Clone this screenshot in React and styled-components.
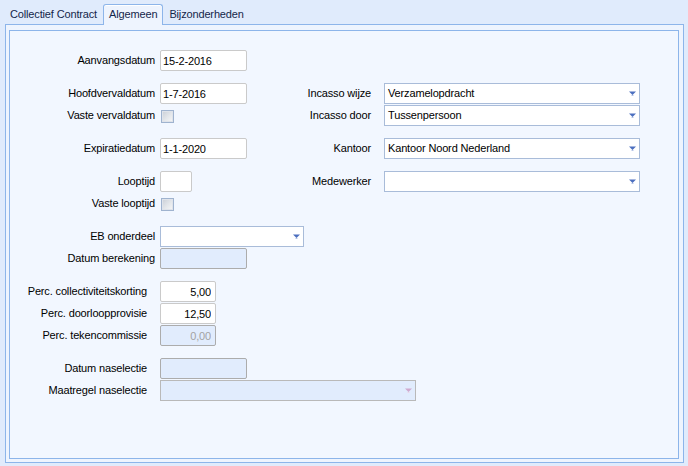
import React from 'react'
import styled, { createGlobalStyle } from 'styled-components'

const GlobalStyle = createGlobalStyle`
  html, body {
    margin: 0;
    padding: 0;
  }
  body {
    background: #e0ebfc;
    font-family: "Liberation Sans", Arial, sans-serif;
    font-size: 11px;
    letter-spacing: -0.15px;
    color: #000;
  }
`

const Window = styled.div`
  width: 688px;
  height: 466px;
  box-sizing: border-box;
  padding: 4px 4px 3px 5px;
  display: flex;
  flex-direction: column;
  background: #e0ebfc;
`

const TabStrip = styled.div`
  display: flex;
  align-items: flex-end;
  height: 20px;
  margin-left: -1px;
  position: relative;
  z-index: 1;
`

const Tab = styled.div`
  height: ${p => (p.$active ? '21px' : '20px')};
  margin-bottom: ${p => (p.$active ? '-1px' : '0')};
  box-sizing: border-box;
  padding: 0 5px;
  line-height: 19px;
  color: #14264a;
  border: 1px solid ${p => (p.$active ? '#8db5ea' : 'transparent')};
  border-bottom: none;
  border-radius: 3px 3px 0 0;
  background: ${p => (p.$active ? '#eef4fe' : 'transparent')};
  box-shadow: ${p => (p.$active ? 'inset 0 1px 0 #ffffff' : 'none')};
  white-space: nowrap;
`

const OuterFrame = styled.div`
  flex: 1;
  display: flex;
  border: 1px solid #8db5ea;
  background: #eef4fe;
  padding: 5px 4px 3px 3px;
`

const Panel = styled.div`
  flex: 1;
  border: 1px solid #8db5ea;
  background: #f2f7ff;
  padding: 19px 0 0 0;
  display: grid;
  grid-template-columns: 290px 1fr;
  align-items: start;
`

const Column = styled.div`
  display: flex;
  flex-direction: column;
  gap: 11px;
  padding-top: ${p => p.$top || 0}px;
`

const Group = styled.div`
  display: flex;
  flex-direction: column;
`

const Row = styled.div`
  display: flex;
  align-items: flex-start;
  height: 22px;
  white-space: nowrap;
`

const Label = styled.div`
  flex-shrink: 0;
  width: ${p => p.$width}px;
  box-sizing: border-box;
  padding-right: ${p => p.$inset || 0}px;
  margin-right: ${p => p.$gap}px;
  text-align: right;
  line-height: 21px;
  color: #000;
`

const TextBox = styled.input`
  flex-shrink: 0;
  width: ${p => p.$width}px;
  height: 21px;
  box-sizing: border-box;
  margin: 0;
  padding: 0 ${p => (p.$right ? '4px' : '2px')};
  border: 1px solid ${p => (p.disabled ? '#acacac' : '#cacaca')};
  border-radius: 2px;
  background: ${p => (p.disabled ? '#e1ecfd' : '#ffffff')};
  font: inherit;
  letter-spacing: inherit;
  color: ${p => (p.disabled ? '#a3a3a3' : '#000')};
  text-align: ${p => (p.$right ? 'right' : 'left')};
  outline: none;
  opacity: 1;
  -webkit-text-fill-color: ${p => (p.disabled ? '#a3a3a3' : '#000')};
`

const SelectBox = styled.div`
  flex-shrink: 0;
  width: ${p => p.$width}px;
  height: 21px;
  box-sizing: border-box;
  display: flex;
  align-items: center;
  justify-content: space-between;
  padding: 0 3px 0 3px;
  border: 1px solid ${p => (p.$disabled ? '#b9b9b9' : '#a9bcd9')};
  background: ${p => (p.$disabled ? '#e1ecfd' : '#ffffff')};
  line-height: 19px;
`

const Check = styled.div`
  flex-shrink: 0;
  width: 13px;
  height: 13px;
  box-sizing: border-box;
  margin-top: 5px;
  margin-left: 1px;
  border: 1px solid #9fb3cf;
  background: linear-gradient(135deg, #c9ced6 0%, #e4e7eb 55%, #f7f7f7 100%);
  box-shadow: inset 0 0 0 1px #dfe3ea;
`

const Arrow = ({ disabled }) => (
  <svg width="7" height="5" viewBox="0 0 7 5">
    <path d="M0 0.5 H7 L3.5 4 Z" fill={disabled ? '#cfa9cf' : '#4c6fbf'} />
    <path d="M2.5 4.5 H4.5" stroke={disabled ? '#ead8ea' : '#b6c4e6'} strokeWidth="1" />
  </svg>
)

const Select = ({ width, value, disabled }) => (
  <SelectBox $width={width} $disabled={disabled}>
    <span>{value}</span>
    <Arrow disabled={disabled} />
  </SelectBox>
)

const LEFT = 145

const App = () => (
  <>
    <GlobalStyle />
    <Window>
      <TabStrip>
        <Tab>Collectief Contract</Tab>
        <Tab $active>Algemeen</Tab>
        <Tab>Bijzonderheden</Tab>
      </TabStrip>
      <OuterFrame>
        <Panel>
          <Column>
            <Group>
              <Row>
                <Label $width={LEFT} $gap={5}>Aanvangsdatum</Label>
                <TextBox $width={87} value="15-2-2016" readOnly />
              </Row>
            </Group>
            <Group>
              <Row>
                <Label $width={LEFT} $gap={5}>Hoofdvervaldatum</Label>
                <TextBox $width={87} value="1-7-2016" readOnly />
              </Row>
              <Row>
                <Label $width={LEFT} $gap={5}>Vaste vervaldatum</Label>
                <Check />
              </Row>
            </Group>
            <Group>
              <Row>
                <Label $width={LEFT} $gap={5}>Expiratiedatum</Label>
                <TextBox $width={87} value="1-1-2020" readOnly />
              </Row>
            </Group>
            <Group>
              <Row>
                <Label $width={LEFT} $gap={5}>Looptijd</Label>
                <TextBox $width={32} value="" readOnly />
              </Row>
              <Row>
                <Label $width={LEFT} $gap={5}>Vaste looptijd</Label>
                <Check />
              </Row>
            </Group>
            <Group>
              <Row>
                <Label $width={LEFT} $gap={5}>EB onderdeel</Label>
                <Select width={144} value="" />
              </Row>
              <Row>
                <Label $width={LEFT} $gap={5}>Datum berekening</Label>
                <TextBox $width={87} value="" disabled readOnly />
              </Row>
            </Group>
            <Group>
              <Row>
                <Label $width={LEFT} $inset={8} $gap={5}>Perc. collectiviteitskorting</Label>
                <TextBox $width={56} $right value="5,00" readOnly />
              </Row>
              <Row>
                <Label $width={LEFT} $inset={8} $gap={5}>Perc. doorloopprovisie</Label>
                <TextBox $width={56} $right value="12,50" readOnly />
              </Row>
              <Row>
                <Label $width={LEFT} $inset={8} $gap={5}>Perc. tekencommissie</Label>
                <TextBox $width={56} $right value="0,00" disabled readOnly />
              </Row>
            </Group>
            <Group>
              <Row>
                <Label $width={LEFT} $inset={8} $gap={5}>Datum naselectie</Label>
                <TextBox $width={87} value="" disabled readOnly />
              </Row>
              <Row>
                <Label $width={LEFT} $inset={8} $gap={5}>Maatregel naselectie</Label>
                <Select width={256} value="" disabled />
              </Row>
            </Group>
          </Column>
          <Column $top={33}>
            <Group>
              <Row>
                <Label $width={71} $gap={13}>Incasso wijze</Label>
                <Select width={256} value="Verzamelopdracht" />
              </Row>
              <Row>
                <Label $width={71} $gap={13}>Incasso door</Label>
                <Select width={256} value="Tussenpersoon" />
              </Row>
            </Group>
            <Group>
              <Row>
                <Label $width={71} $gap={13}>Kantoor</Label>
                <Select width={256} value="Kantoor Noord Nederland" />
              </Row>
            </Group>
            <Group>
              <Row>
                <Label $width={71} $gap={13}>Medewerker</Label>
                <Select width={256} value="" />
              </Row>
            </Group>
          </Column>
        </Panel>
      </OuterFrame>
    </Window>
  </>
)

export default App
